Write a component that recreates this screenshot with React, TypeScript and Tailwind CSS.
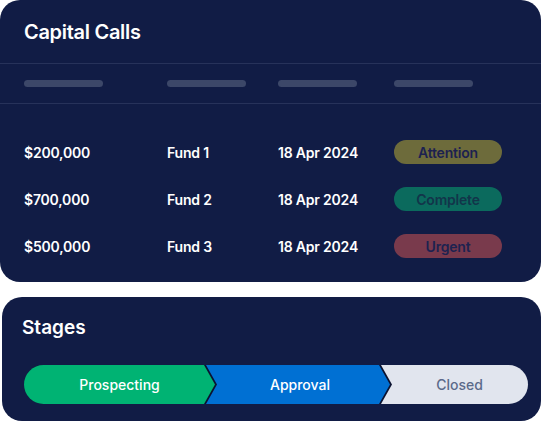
import React from "react";

const rows = [
  { amount: "$200,000", fund: "Fund 1", date: "18 Apr 2024", status: "Attention", badge: "bg-[#6d6b3b] text-[#1c2150]" },
  { amount: "$700,000", fund: "Fund 2", date: "18 Apr 2024", status: "Complete", badge: "bg-[#0b6a5d] text-[#12354a]" },
  { amount: "$500,000", fund: "Fund 3", date: "18 Apr 2024", status: "Urgent", badge: "bg-[#793a4c] text-[#1d2250]" },
];

export default function App() {
  return (
    <div className="w-[543px] h-[421px] bg-white flex flex-col gap-[15px] font-['Inter',sans-serif]">
      {/* Capital Calls */}
      <div className="w-[541px] h-[282px] bg-[#111c45] rounded-[20px] flex flex-col">
        <h2 className="px-6 pt-[18px] h-[63px] text-[20px] leading-[28px] font-semibold text-white tracking-[-0.3px]">
          Capital Calls
        </h2>
        <div className="h-[41px] border-y border-[#27325a] flex items-center px-6">
          <div className="w-[79px] h-[7px] rounded-full bg-[#3c4768]" />
          <div className="w-[79px] h-[7px] rounded-full bg-[#3c4768] ml-[64px]" />
          <div className="w-[79px] h-[7px] rounded-full bg-[#3c4768] ml-[32px]" />
          <div className="w-[79px] h-[7px] rounded-full bg-[#3c4768] ml-[37px]" />
        </div>
        <div className="flex flex-col pt-[36px] gap-[23px] px-6">
          {rows.map((r) => (
            <div key={r.fund} className="flex items-center h-[24px] text-[14px] font-semibold text-white tracking-[-0.2px]">
              <span className="w-[143px]">{r.amount}</span>
              <span className="w-[111px]">{r.fund}</span>
              <span className="w-[116px]">{r.date}</span>
              <span className={`w-[108px] h-[24px] rounded-full flex items-center justify-center text-[14px] font-semibold ${r.badge}`}>
                {r.status}
              </span>
            </div>
          ))}
        </div>
      </div>

      {/* Stages */}
      <div className="mx-[2px] w-[539px] h-[124px] bg-[#111c45] rounded-[20px] flex flex-col px-5">
        <h2 className="pt-[17px] h-[68px] text-[19px] font-semibold text-white">Stages</h2>
        <div className="flex h-[39px] ml-[2px] w-[504px]">
          <div className="relative z-20 w-[193px] h-full bg-[#0b1230] rounded-l-full [clip-path:polygon(0_0,calc(100%-11px)_0,100%_50%,calc(100%-11px)_100%,0_100%)]">
            <div className="h-full bg-[#00b373] rounded-l-full flex items-center justify-center pl-[6px] pr-[8px] text-[14px] font-medium text-white [clip-path:polygon(0_0,calc(100%-13px)_0,calc(100%-2px)_50%,calc(100%-13px)_100%,0_100%)]">
              Prospecting
            </div>
          </div>
          <div className="relative z-10 -ml-[11px] w-[186px] h-full bg-[#0b1230] [clip-path:polygon(0_0,calc(100%-11px)_0,100%_50%,calc(100%-11px)_100%,0_100%)]">
            <div className="h-full bg-[#0070d3] flex items-center justify-center pl-[8px] pr-[6px] text-[14px] font-medium text-white [clip-path:polygon(0_0,calc(100%-13px)_0,calc(100%-2px)_50%,calc(100%-13px)_100%,0_100%)]">
              Approval
            </div>
          </div>
          <div className="-ml-[11px] w-[147px] h-full bg-[#e1e5ee] rounded-r-full flex items-center justify-center pl-[10px] text-[14px] font-medium text-[#5b6a8a]">
            Closed
          </div>
        </div>
      </div>
    </div>
  );
}
